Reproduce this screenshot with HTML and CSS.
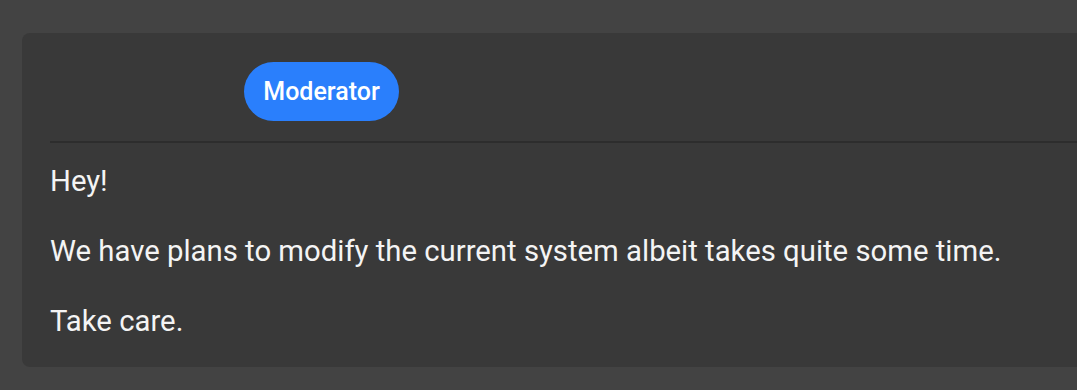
FILE: index.html
```html
<!DOCTYPE html>
<html>
<head>
<meta charset="utf-8">
<link rel="stylesheet" href="styles.css">
</head>
<body>
<div class="card">
  <div class="header">
    <span class="badge">Moderator</span>
  </div>
  <div class="body">
    <p>Hey!</p>
    <p>We have plans to modify the current system albeit takes quite some time.</p>
    <p>Take care.</p>
  </div>
</div>
</body>
</html>
```
FILE: styles.css
```css
html, body {
  margin: 0;
  padding: 0;
  background: #434343;
  overflow: hidden;
  height: 390px;
}
body {
  padding: 33px 0 0 22px;
  box-sizing: border-box;
  font-family: Roboto, "Liberation Sans", sans-serif;
}
.card {
  width: 1100px;
  height: 334px;
  background: #393939;
  border-radius: 8px;
  padding: 0 0 0 28px;
  box-sizing: border-box;
}
.header {
  padding: 29px 0 20px 194px;
  border-bottom: 2px solid #2d2d2d;
  display: flex;
}
.badge {
  display: inline-flex;
  align-items: center;
  justify-content: center;
  height: 59px;
  width: 155px;
  border-radius: 30px;
  background: #2a7ffc;
  color: #fff;
  font-weight: 500;
  font-size: 25px;
}
.body {
  padding-top: 21px;
  color: #f4f4f4;
  font-size: 29.3px;
}
.body p {
  margin: 0 0 35px 0;
  line-height: 35px;
}
```
